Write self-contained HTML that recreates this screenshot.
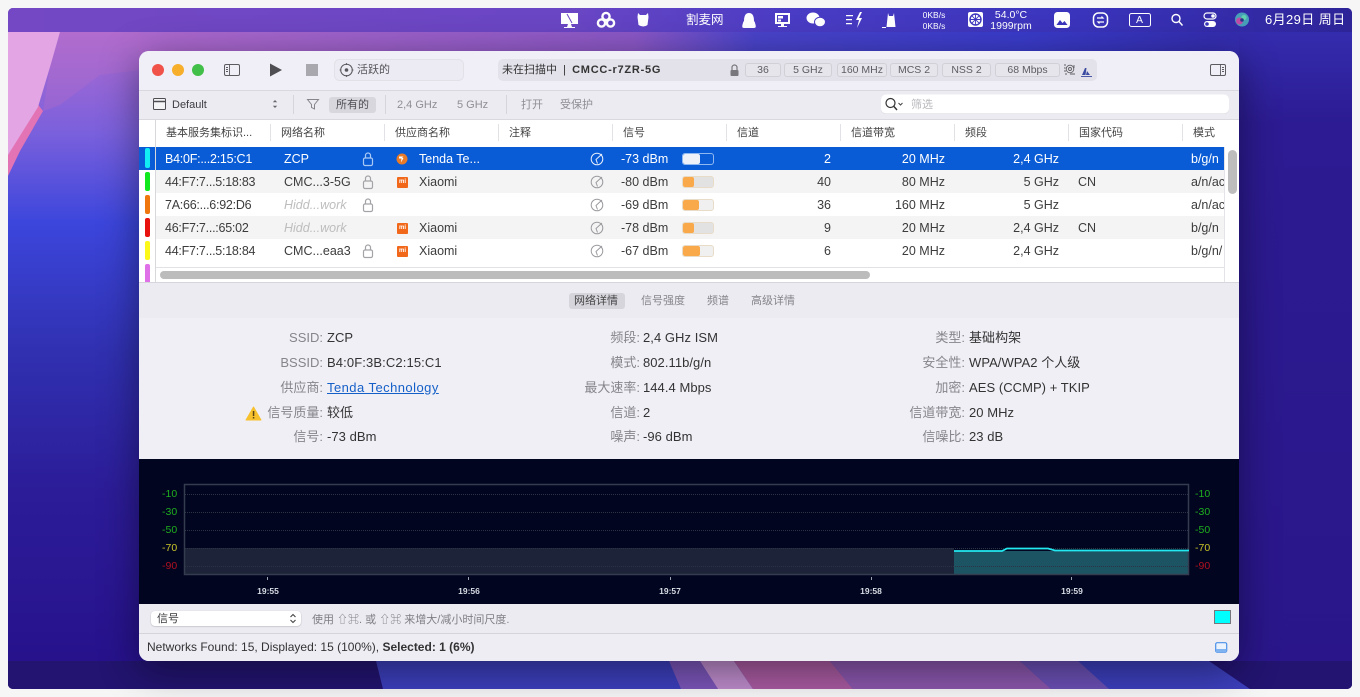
<!DOCTYPE html>
<html><head><meta charset="utf-8"><title>WiFi Explorer</title>
<style>
html,body{margin:0;padding:0;width:1360px;height:697px;overflow:hidden;background:#f6f6f7}
body{position:relative;font-family:"Liberation Sans","Noto Sans CJK SC",sans-serif;color:#333}
svg{position:absolute;display:block}
.a{position:absolute}
.t{position:absolute;white-space:nowrap;line-height:16px;height:16px}
.r{text-align:right}
.h{font-size:11px;color:#444;top:125px}
.s{position:absolute;top:124px;width:1px;height:17px;background:#e2e2e6}
.c{font-size:12.5px;color:#3c3c3c}
.mac{letter-spacing:-.25px}
.w{color:#fff}
.hid{color:#bdbdbd;font-style:italic}
.gray{color:#8e8e93;font-size:11px;top:97px}
.chip{position:absolute;top:63px;height:12px;line-height:12px;border:1px solid #d0d0d6;border-radius:3px;font-size:10.5px;color:#5c5c62;text-align:center;padding:0;background:#e6e5ec}
.lb{position:absolute;font-size:13px;color:#85858b;text-align:right;white-space:nowrap;line-height:16px}
.v{position:absolute;font-size:13px;color:#333;white-space:nowrap;line-height:16px;letter-spacing:.05px}
.y{position:absolute;font-size:10.5px;line-height:12px;white-space:nowrap}
.x{position:absolute;font-size:8.5px;font-weight:bold;color:#d8dce4;line-height:12px;width:40px;text-align:center;top:585px}
.tk{position:absolute;top:577px;width:1px;height:3px;background:#9aa0ac}
.m{position:absolute;color:#fff;white-space:nowrap}
.mi{position:absolute;width:11px;height:11px;background:#f1681a;border-radius:1px;color:#fff;font-size:6px;line-height:11px;text-align:center;font-weight:bold}
.bar{position:absolute;left:682px;width:30px;height:10px;border-radius:3px;border:1px solid #e8dcc8;background:#e2e2e2;overflow:hidden}
.bar i{display:block;height:100%;background:#f9a94a;border-radius:2px}
</style></head><body>

<!-- wallpaper -->
<svg style="left:0;top:0" width="1360" height="697" viewBox="0 0 1360 697">
<defs>
<clipPath id="desk"><rect x="8" y="8" width="1344" height="681" rx="5"/></clipPath>
<linearGradient id="vg" x1="0" y1="0" x2="0" y2="1">
<stop offset="0" stop-color="#b06cd0"/><stop offset=".154" stop-color="#7a60dc"/><stop offset=".29" stop-color="#3c46dc"/><stop offset=".49" stop-color="#3030b0"/><stop offset=".7" stop-color="#2c1c98"/><stop offset="1" stop-color="#26108a"/>
</linearGradient>
<linearGradient id="rg" x1="0" y1="0" x2="0" y2="1">
<stop offset="0" stop-color="#342cae"/><stop offset=".14" stop-color="#2c1b92"/><stop offset="1" stop-color="#2a168a"/>
</linearGradient>
<linearGradient id="top" x1="0" y1="0" x2="1" y2="0">
<stop offset="0" stop-color="#ae6ad0"/><stop offset=".45" stop-color="#8c58c8"/><stop offset=".56" stop-color="#4a44cc"/><stop offset=".8" stop-color="#3a3ccc"/><stop offset="1" stop-color="#342cae"/>
</linearGradient>
<linearGradient id="menu" x1="0" y1="0" x2="1" y2="0">
<stop offset="0" stop-color="#7448c4"/><stop offset=".42" stop-color="#6a46c4"/><stop offset=".58" stop-color="#4a3cc4"/><stop offset=".8" stop-color="#3a34bc"/><stop offset="1" stop-color="#2e2498"/>
</linearGradient>
</defs>
<g clip-path="url(#desk)">
<rect x="8" y="8" width="1344" height="681" fill="#2a1a8e"/>
<rect x="8" y="32" width="135" height="657" fill="url(#vg)"/>
<rect x="1235" y="32" width="117" height="657" fill="url(#rg)"/>
<rect x="139" y="32" width="1100" height="22" fill="url(#top)"/>
<polygon points="60,32 140,32 140,70 100,75 60,105 43,111 50,67" fill="#b56cc8" opacity=".35"/>
<polygon points="33,98 8,150 8,176 20,151 43,111" fill="#e273b4"/>
<polygon points="8,32 60,32 50,67 38,107 8,155" fill="#e3a5e3"/>
<rect x="8" y="661" width="1344" height="28" fill="#221470"/>
<polygon points="376,661 1209,661 1250,689 383,689" fill="#3c3fbc"/>
<polygon points="669,661 700,661 718,689 681,689" fill="#7a55b8"/>
<polygon points="700,661 734,661 753,689 718,689" fill="#bd8bcb"/>
<polygon points="734,661 830,661 853,689 753,689" fill="#a85aa0"/>
<polygon points="830,661 1020,661 1051,689 853,689" fill="#8a56ac"/>
<polygon points="1020,661 1078,661 1109,689 1051,689" fill="#6a50b4"/>
<rect x="8" y="8" width="1344" height="24" fill="url(#menu)"/>
</g>
</svg>

<!-- menu bar -->
<svg style="left:558px;top:10px" width="700" height="20" viewBox="0 0 700 20" fill="#fff">
<path d="M3 3h17v11H13l1 3h3v1H6v-1h3l1-3H3z"/><path d="M9 4l5 9" stroke="#6a46c4" stroke-width="1"/>
<g fill="none" stroke="#fff" stroke-width="2.4"><circle cx="48" cy="6.5" r="3.6"/><circle cx="43.5" cy="13" r="3.6"/><circle cx="52.5" cy="13" r="3.6"/></g>
<path d="M80 3l2 2h6l2-2 .5 4-1 8q-4 3-9 0l-1-8z"/>
<path d="M186 18q-3 0-1-5 0-1 1-2 0-8 5-8t5 8q1 1 1 2 2 5-1 5z"/>
<path d="M217 3h15v11h-6v2h3v1h-9v-1h3v-2h-6zM219 5v7h11V5z" fill-rule="evenodd"/><rect x="220" y="6" width="5" height="2.5"/><rect x="220" y="9.5" width="3" height="2"/>
<ellipse cx="255" cy="8" rx="6.5" ry="5.5"/><ellipse cx="262" cy="12" rx="5.5" ry="4.8" stroke="#4a3cc4" stroke-width="1"/>
<path d="M288 5h7v1.3h-7zM288 9h6v1.3h-6zM288 13h6v1.3h-6z"/><path d="M302 2l-4 8h3l-2 8 5-10h-3l3-6z"/>
<path d="M330 3l1 3h4l1-3 1.500 14h-9z M324 17h4v1h-4z"/>
<rect x="410" y="2" width="15" height="15" rx="2"/><circle cx="417.500" cy="9.500" r="5.500" fill="none" stroke="#3e38c0" stroke-width="1.400"/><path d="M417.500 4v11M412 9.500h11M413.600 5.600l7.800 7.800M421.400 5.600l-7.800 7.800" stroke="#3e38c0" stroke-width=".9"/>
<rect x="496" y="2" width="16" height="16" rx="3.500"/><path d="M498.500 15l3.500-5 2.500 3 2-2 3 4z" fill="#3a34bc"/>
<rect x="535.500" y="3" width="14" height="14" rx="5" fill="none" stroke="#fff" stroke-width="1.500"/><path d="M539 8h6l-1.500-1.500M546 12h-6l1.500 1.500" fill="none" stroke="#fff" stroke-width="1.200"/>
<rect x="571.500" y="3.500" width="21" height="13" rx="2" fill="none" stroke="#fff"/>
<circle cx="618" cy="8.500" r="4" fill="none" stroke="#fff" stroke-width="1.400"/><path d="M621 11.500l3.500 4" stroke="#fff" stroke-width="1.500"/>
<rect x="646" y="3" width="12" height="6" rx="3" fill="none" stroke="#fff" stroke-width="1.200"/><circle cx="655" cy="6" r="1.800"/><rect x="646" y="11" width="12" height="6" rx="3"/><circle cx="649" cy="14" r="1.800" fill="#3a34bc"/>
<circle cx="684" cy="9.500" r="7" fill="#48a0b8"/><circle cx="681.500" cy="11" r="3.500" fill="#c04aa8"/><circle cx="686" cy="7.500" r="2.600" fill="#5ed0b0"/><circle cx="684" cy="10" r="1.800" fill="#2a3a88"/>
</svg>
<div class="m" style="left:686px;top:13px;font-size:12.500px;line-height:15px">割麦网</div>
<div class="m" style="left:921px;top:10px;font-size:8.500px;line-height:11px;text-align:center;width:26px">0KB/s<br>0KB/s</div>
<div class="m" style="left:988px;top:10px;font-size:10.500px;line-height:11px;text-align:center;width:46px">54.0°C<br>1999rpm</div>
<div class="m" style="left:1129px;top:13px;font-size:10.500px;line-height:14px;width:21px;text-align:center">A</div>
<div class="m" style="left:1265px;top:12px;font-size:13px;letter-spacing:.4px;line-height:15px">6月29日 周日</div>

<!-- window -->
<div class="a" style="left:139px;top:51px;width:1100px;height:610px;border-radius:10px;background:#eeedf4;box-shadow:0 8px 40px rgba(0,0,0,.45);overflow:hidden">
<div class="a" style="left:0;top:0;width:1100px;height:39px;background:#f0eef6;border-bottom:1px solid #d9d8de"></div>
<div class="a" style="left:0;top:40px;width:1100px;height:28px;background:#ecebf2;border-bottom:1px solid #d9d8de"></div>
<div class="a" style="left:0;top:69px;width:1100px;height:162px;background:#fff"></div>
<div class="a" style="left:0;top:231px;width:1100px;height:35px;background:#ecebf2;border-top:1px solid #d6d6dc;border-bottom:1px solid #dcdce1"></div>
<div class="a" style="left:0;top:267px;width:1100px;height:141px;background:#f0eff6"></div>
<div class="a" style="left:0;top:408px;width:1100px;height:145px;background:#01051f"></div>
<div class="a" style="left:0;top:553px;width:1100px;height:29px;background:#ecebf2;border-bottom:1px solid #d4d4d9"></div>
<div class="a" style="left:0;top:583px;width:1100px;height:27px;background:#eeedf4"></div>
</div>

<!-- traffic lights + toolbar icons -->
<svg style="left:139px;top:51px" width="1100" height="70" viewBox="0 0 1100 70">
<circle cx="19" cy="19" r="6" fill="#f0524a"/><circle cx="39" cy="19" r="6" fill="#f7ae2b"/><circle cx="59" cy="19" r="6" fill="#41bf48"/>
<rect x="85.500" y="13.500" width="15" height="11" rx="1.500" fill="none" stroke="#5b5b60"/><path d="M90.500 14v10M87 16.500h2M87 18.500h2M87 20.500h2" stroke="#5b5b60" stroke-width=".9"/>
<path d="M131 12.500l12 6.500-12 6.500z" fill="#4e4e53"/>
<rect x="167" y="13" width="12" height="12" fill="#a9a8ae"/>
<rect x="195.500" y="8.500" width="129" height="21" rx="5" fill="#eceaf2" stroke="#e2e1e8"/>
<circle cx="207.500" cy="19" r="5.800" fill="none" stroke="#55555a"/><circle cx="207.500" cy="19" r="1.800" fill="#55555a"/><path d="M207.500 12v2M207.500 24v2M200.500 19h2M212.500 19h2" stroke="#55555a" stroke-width=".8"/>
<rect x="359" y="8" width="599" height="22" rx="5" fill="#e3e2ea"/>
<path d="M593 19v-2.500a2.500 2.500 0 015 0V19" fill="none" stroke="#77777c" stroke-width="1.200"/><rect x="591.500" y="19" width="8" height="6" rx="1" fill="#77777c"/>
<g fill="none" stroke="#5f5f64" stroke-width=".9"><circle cx="931" cy="18" r="3.800"/><circle cx="931" cy="18" r="1.500"/><path d="M925 14h2M925 17h1.500M925 20h2M926 23h2M931 23h5M935 14v3"/></g>
<path d="M943 24l3-7 1.500 0-1 7zM948 20l3 4h-4z" fill="#3a4aa0"/><path d="M942 25.500h11" stroke="#3a4aa0" stroke-width=".9"/>
<rect x="1071.500" y="13.500" width="15" height="11" rx="1.500" fill="none" stroke="#5b5b60"/><path d="M1081.500 14v10M1083 16.500h2M1083 18.500h2M1083 20.500h2" stroke="#5b5b60" stroke-width=".9"/>
<rect x="14.500" y="47.500" width="12" height="11" rx="1" fill="#f4f4f7" stroke="#4d4d52"/><path d="M15 50.500h11" stroke="#4d4d52" stroke-width="1.500"/>
<path d="M136 49l-2.200 2.300h4.400zM136 57l-2.200-2.300h4.400z" fill="#66666b"/>
<path d="M168.500 48.500h11l-4 5v4.500l-3-1.500v-3z" fill="none" stroke="#85858a"/>
<rect x="190" y="46" width="47" height="16" rx="3" fill="#d8d7de"/>
<path d="M154.500 44v19M246.500 44v19M367.500 44v19" stroke="#d5d5da"/>
<rect x="742" y="44" width="348" height="19" rx="5" fill="#d4d4d8"/>
<rect x="742" y="43.500" width="348" height="19" rx="5" fill="#fff"/>
<circle cx="751.500" cy="52" r="4.500" fill="none" stroke="#333" stroke-width="1.200"/><path d="M755 55.500l3 3.500" stroke="#333" stroke-width="1.400"/><path d="M759.500 52l2 2 2-2" fill="none" stroke="#444"/>
</svg>
<div class="t" style="left:357px;top:62px;font-size:11px;color:#55555a">活跃的</div>
<div class="t" style="left:502px;top:62px;font-size:11px;color:#333">未在扫描中&nbsp; |&nbsp; <b style="letter-spacing:.75px">CMCC-r7ZR-5G</b></div>
<div class="chip" style="left:745px;width:34px">36</div>
<div class="chip" style="left:784px;width:46px">5 GHz</div>
<div class="chip" style="left:837px;width:48px">160 MHz</div>
<div class="chip" style="left:890px;width:46px">MCS 2</div>
<div class="chip" style="left:942px;width:47px">NSS 2</div>
<div class="chip" style="left:995px;width:63px">68 Mbps</div>

<div class="t" style="left:172px;top:97px;font-size:11px;color:#3c3c40">Default</div>
<div class="t" style="left:336px;top:97px;font-size:11px;color:#4e4e53">所有的</div>
<div class="t gray" style="left:397px">2,4 GHz</div>
<div class="t gray" style="left:457px">5 GHz</div>
<div class="t gray" style="left:521px">打开</div>
<div class="t gray" style="left:560px">受保护</div>
<div class="t" style="left:911px;top:97px;font-size:11px;color:#b9b9bd">筛选</div>

<!-- table header -->
<div class="s" style="left:155px;top:119px;height:28px;background:#d8d8dc"></div>
<div class="t h" style="left:166px">基本服务集标识...</div><div class="s" style="left:270px"></div>
<div class="t h" style="left:281px">网络名称</div><div class="s" style="left:384px"></div>
<div class="t h" style="left:395px">供应商名称</div><div class="s" style="left:498px"></div>
<div class="t h" style="left:509px">注释</div><div class="s" style="left:612px"></div>
<div class="t h" style="left:623px">信号</div><div class="s" style="left:726px"></div>
<div class="t h" style="left:737px">信道</div><div class="s" style="left:840px"></div>
<div class="t h" style="left:851px">信道带宽</div><div class="s" style="left:954px"></div>
<div class="t h" style="left:965px">频段</div><div class="s" style="left:1068px"></div>
<div class="t h" style="left:1079px">国家代码</div><div class="s" style="left:1182px"></div>
<div class="t h" style="left:1193px">模式</div>

<!-- rows bg -->
<div class="a" style="left:139px;top:147px;width:1085px;height:23px;background:#0a5cd6"></div>
<div class="a" style="left:156px;top:170px;width:1068px;height:23px;background:#f4f4f4"></div>
<div class="a" style="left:156px;top:216px;width:1068px;height:23px;background:#f4f4f4"></div>
<div class="a" style="left:155px;top:147px;width:1px;height:135px;background:#d8d8dc"></div>
<div class="a" style="left:1224px;top:147px;width:1px;height:135px;background:#e4e4e8"></div>
<div class="a" style="left:156px;top:267px;width:1068px;height:1px;background:#e2e2e6"></div>
<div class="a" style="left:1228px;top:150px;width:9px;height:44px;border-radius:5px;background:#bdbdbd"></div>
<div class="a" style="left:160px;top:271px;width:710px;height:8px;border-radius:4px;background:#bcbcbc"></div>

<!-- color tags -->
<div class="a" style="left:145px;top:148px;width:5px;height:20px;border-radius:2px;background:#12ecf4"></div>
<div class="a" style="left:145px;top:172px;width:5px;height:19px;border-radius:2px;background:#12e81e"></div>
<div class="a" style="left:145px;top:195px;width:5px;height:19px;border-radius:2px;background:#f0760e"></div>
<div class="a" style="left:145px;top:218px;width:5px;height:19px;border-radius:2px;background:#e8120e"></div>
<div class="a" style="left:145px;top:241px;width:5px;height:19px;border-radius:2px;background:#fcf81a"></div>
<div class="a" style="left:145px;top:264px;width:5px;height:18px;border-radius:2px 2px 0 0;background:#e070e8"></div>

<!-- row cells -->
<div class="t c w mac" style="left:165px;top:151px">B4:0F:...2:15:C1</div>
<div class="t c w" style="left:284px;top:151px">ZCP</div>
<div class="t c w" style="left:419px;top:151px">Tenda Te...</div>
<div class="t c w" style="left:621px;top:151px">-73 dBm</div>
<div class="t c w r" style="left:771px;top:151px;width:60px">2</div>
<div class="t c w r" style="left:885px;top:151px;width:60px">20 MHz</div>
<div class="t c w r" style="left:999px;top:151px;width:60px">2,4 GHz</div>
<div class="t c w" style="left:1191px;top:151px">b/g/n</div>

<div class="t c mac" style="left:165px;top:174px">44:F7:7...5:18:83</div>
<div class="t c" style="left:284px;top:174px">CMC...3-5G</div>
<div class="t c" style="left:419px;top:174px">Xiaomi</div>
<div class="t c" style="left:621px;top:174px">-80 dBm</div>
<div class="t c r" style="left:771px;top:174px;width:60px">40</div>
<div class="t c r" style="left:885px;top:174px;width:60px">80 MHz</div>
<div class="t c r" style="left:999px;top:174px;width:60px">5 GHz</div>
<div class="t c" style="left:1078px;top:174px">CN</div>
<div class="t c" style="left:1191px;top:174px;width:33px;overflow:hidden">a/n/ac</div>

<div class="t c mac" style="left:165px;top:197px">7A:66:...6:92:D6</div>
<div class="t c hid" style="left:284px;top:197px">Hidd...work</div>
<div class="t c" style="left:621px;top:197px">-69 dBm</div>
<div class="t c r" style="left:771px;top:197px;width:60px">36</div>
<div class="t c r" style="left:885px;top:197px;width:60px">160 MHz</div>
<div class="t c r" style="left:999px;top:197px;width:60px">5 GHz</div>
<div class="t c" style="left:1191px;top:197px;width:33px;overflow:hidden">a/n/ac</div>

<div class="t c mac" style="left:165px;top:220px">46:F7:7...:65:02</div>
<div class="t c hid" style="left:284px;top:220px">Hidd...work</div>
<div class="t c" style="left:419px;top:220px">Xiaomi</div>
<div class="t c" style="left:621px;top:220px">-78 dBm</div>
<div class="t c r" style="left:771px;top:220px;width:60px">9</div>
<div class="t c r" style="left:885px;top:220px;width:60px">20 MHz</div>
<div class="t c r" style="left:999px;top:220px;width:60px">2,4 GHz</div>
<div class="t c" style="left:1078px;top:220px">CN</div>
<div class="t c" style="left:1191px;top:220px">b/g/n</div>

<div class="t c mac" style="left:165px;top:243px">44:F7:7...5:18:84</div>
<div class="t c" style="left:284px;top:243px">CMC...eaa3</div>
<div class="t c" style="left:419px;top:243px">Xiaomi</div>
<div class="t c" style="left:621px;top:243px">-67 dBm</div>
<div class="t c r" style="left:771px;top:243px;width:60px">6</div>
<div class="t c r" style="left:885px;top:243px;width:60px">20 MHz</div>
<div class="t c r" style="left:999px;top:243px;width:60px">2,4 GHz</div>
<div class="t c" style="left:1191px;top:243px;width:33px;overflow:hidden">b/g/n/</div>

<!-- vendor logos -->
<svg style="left:396px;top:153px" width="12" height="12" viewBox="0 0 12 12"><circle cx="6" cy="6" r="5.500" fill="#e87a28"/><path d="M3 3.500h4.500L6 5h1.500L5 9.500 5.500 5.500H3z" fill="#fff"/></svg>
<div class="mi" style="left:397px;top:177px">mi</div>
<div class="mi" style="left:397px;top:223px">mi</div>
<div class="mi" style="left:397px;top:246px">mi</div>

<!-- locks + clock glyphs -->
<svg style="left:139px;top:147px" width="600" height="120" viewBox="0 0 600 120" fill="none">
<g stroke="#a8c8f4" stroke-width="1.200"><rect x="224.500" y="11" width="9" height="7.500" rx="1.500"/><path d="M226.500 11V8.500a2.500 2.500 0 015 0V11"/></g>
<g stroke="#a4a4a8" stroke-width="1.200">
<rect x="224.500" y="34" width="9" height="7.500" rx="1.500"/><path d="M226.500 34v-2.500a2.500 2.500 0 015 0V34"/>
<rect x="224.500" y="57" width="9" height="7.500" rx="1.500"/><path d="M226.500 57v-2.500a2.500 2.500 0 015 0V57"/>
<rect x="224.500" y="103" width="9" height="7.500" rx="1.500"/><path d="M226.500 103v-2.500a2.500 2.500 0 015 0V103"/>
</g>
<g stroke="#e8f0fc" stroke-width="1"><circle cx="458" cy="12" r="5.800"/><path d="M463 7l-6 5.500 1.500 4"/></g>
<g stroke="#9a9a9f" stroke-width="1">
<circle cx="458" cy="35" r="5.800"/><path d="M463 30l-6 5.500 1.500 4"/>
<circle cx="458" cy="58" r="5.800"/><path d="M463 53l-6 5.500 1.500 4"/>
<circle cx="458" cy="81" r="5.800"/><path d="M463 76l-6 5.500 1.500 4"/>
<circle cx="458" cy="104" r="5.800"/><path d="M463 99l-6 5.500 1.500 4"/>
</g>
</svg>

<!-- signal bars -->
<div class="bar" style="top:153px;background:#0a5cd6;border-color:#8fb8f0"><i style="width:55%;background:#eef2f8"></i></div>
<div class="bar" style="top:176px"><i style="width:35%"></i></div>
<div class="bar" style="top:199px;background:#f0f0f0"><i style="width:52%"></i></div>
<div class="bar" style="top:222px"><i style="width:37%"></i></div>
<div class="bar" style="top:245px;background:#f0f0f0"><i style="width:57%"></i></div>

<!-- tabs -->
<div class="a" style="left:569px;top:293px;width:56px;height:16px;border-radius:3px;background:#d6d5dc"></div>
<div class="t" style="left:574px;top:293px;font-size:11px;color:#444">网络详情</div>
<div class="t" style="left:641px;top:293px;font-size:11px;color:#85858a">信号强度</div>
<div class="t" style="left:707px;top:293px;font-size:11px;color:#85858a">频谱</div>
<div class="t" style="left:751px;top:293px;font-size:11px;color:#85858a">高级详情</div>

<!-- details -->
<div class="lb" style="left:222px;width:101px;top:330px">SSID:</div><div class="v" style="left:327px;top:330px">ZCP</div>
<div class="lb" style="left:222px;width:101px;top:355px">BSSID:</div><div class="v" style="left:327px;top:355px;letter-spacing:.12px">B4:0F:3B:C2:15:C1</div>
<div class="lb" style="left:222px;width:101px;top:380px">供应商:</div><div class="v" style="left:327px;top:380px;color:#1560c8;text-decoration:underline;letter-spacing:.45px">Tenda Technology</div>
<div class="lb" style="left:222px;width:101px;top:405px">信号质量:</div><div class="v" style="left:327px;top:405px">较低</div>
<div class="lb" style="left:222px;width:101px;top:429px">信号:</div><div class="v" style="left:327px;top:429px">-73 dBm</div>
<svg style="left:245px;top:406px" width="17" height="15" viewBox="0 0 17 15"><path d="M8.500 1L16 14H1z" fill="#f7c12e" stroke="#f7c12e" stroke-linejoin="round"/><rect x="7.800" y="5" width="1.500" height="5" fill="#5a4410"/><rect x="7.800" y="11" width="1.500" height="1.500" fill="#5a4410"/></svg>

<div class="lb" style="left:540px;width:100px;top:330px">频段:</div><div class="v" style="left:643px;top:330px">2,4 GHz ISM</div>
<div class="lb" style="left:540px;width:100px;top:355px">模式:</div><div class="v" style="left:643px;top:355px">802.11b/g/n</div>
<div class="lb" style="left:540px;width:100px;top:380px">最大速率:</div><div class="v" style="left:643px;top:380px">144.4 Mbps</div>
<div class="lb" style="left:540px;width:100px;top:405px">信道:</div><div class="v" style="left:643px;top:405px">2</div>
<div class="lb" style="left:540px;width:100px;top:429px">噪声:</div><div class="v" style="left:643px;top:429px">-96 dBm</div>

<div class="lb" style="left:865px;width:100px;top:330px">类型:</div><div class="v" style="left:969px;top:330px">基础构架</div>
<div class="lb" style="left:865px;width:100px;top:355px">安全性:</div><div class="v" style="left:969px;top:355px">WPA/WPA2 个人级</div>
<div class="lb" style="left:865px;width:100px;top:380px">加密:</div><div class="v" style="left:969px;top:380px">AES (CCMP) + TKIP</div>
<div class="lb" style="left:865px;width:100px;top:405px">信道带宽:</div><div class="v" style="left:969px;top:405px">20 MHz</div>
<div class="lb" style="left:865px;width:100px;top:429px">信噪比:</div><div class="v" style="left:969px;top:429px">23 dB</div>

<!-- chart -->
<svg style="left:139px;top:459px" width="1100" height="145" viewBox="0 0 1100 145" fill="none">
<rect x="45" y="89" width="770" height="26" fill="#1d2439"/>
<path d="M815 92h235v23H815z" fill="#1d5464"/>
<g stroke="#2c3345" stroke-dasharray="1 1"><path d="M46 35.500h1003M46 53.500h1003M46 71.500h1003M46 89.500h1003M46 107.500h1003"/></g>
<rect x="45.500" y="25.500" width="1004" height="90" stroke="#343d50" stroke-width="1.500"/>
<path d="M815 92h48l5-2.500h41l7 2h134" stroke="#22e8f0" stroke-width="1.800"/>
</svg>
<div class="y" style="left:162px;top:488px;color:#1fae1f">-10</div>
<div class="y" style="left:162px;top:506px;color:#1fae1f">-30</div>
<div class="y" style="left:162px;top:524px;color:#1fae1f">-50</div>
<div class="y" style="left:162px;top:542px;color:#c8c428">-70</div>
<div class="y" style="left:162px;top:560px;color:#b01020">-90</div>
<div class="y" style="left:1195px;top:488px;color:#1fae1f">-10</div>
<div class="y" style="left:1195px;top:506px;color:#1fae1f">-30</div>
<div class="y" style="left:1195px;top:524px;color:#1fae1f">-50</div>
<div class="y" style="left:1195px;top:542px;color:#c8c428">-70</div>
<div class="y" style="left:1195px;top:560px;color:#b01020">-90</div>
<div class="tk" style="left:267px"></div><div class="x" style="left:248px">19:55</div>
<div class="tk" style="left:468px"></div><div class="x" style="left:449px">19:56</div>
<div class="tk" style="left:670px"></div><div class="x" style="left:650px">19:57</div>
<div class="tk" style="left:871px"></div><div class="x" style="left:851px">19:58</div>
<div class="tk" style="left:1071px"></div><div class="x" style="left:1052px">19:59</div>

<!-- bottom bar -->
<div class="a" style="left:151px;top:611px;width:150px;height:15px;border-radius:4px;background:#fff;box-shadow:0 .5px 1.500px rgba(0,0,0,.25)"></div>
<div class="t" style="left:157px;top:611px;font-size:11px;color:#3c3c40">信号</div>
<svg style="left:289px;top:613px" width="8" height="11" viewBox="0 0 8 11"><path d="M1.500 4L4 1.500 6.500 4M1.500 7L4 9.500 6.500 7" fill="none" stroke="#444" stroke-width="1.100"/></svg>
<div class="t" style="left:312px;top:612px;font-size:11px;color:#7e7e84">使用 ⇧⌘. 或 ⇧⌘ 来增大/减小时间尺度.</div>
<div class="a" style="left:1214px;top:610px;width:15px;height:12px;background:#0ff;border:1.500px solid #76767c;outline:none"></div>
<div class="t" style="left:147px;top:639px;font-size:12px;color:#333">Networks Found: 15, Displayed: 15 (100%), <b>Selected: 1 (6%)</b></div>
<svg style="left:1215px;top:642px" width="13" height="12" viewBox="0 0 13 12"><rect x=".7" y=".7" width="11" height="9.500" rx="1.500" fill="#eaf2fd" stroke="#4a90e8" stroke-width="1.200"/><rect x="1" y="7" width="10.500" height="3" fill="#7fb2f0"/></svg>

</body></html>
